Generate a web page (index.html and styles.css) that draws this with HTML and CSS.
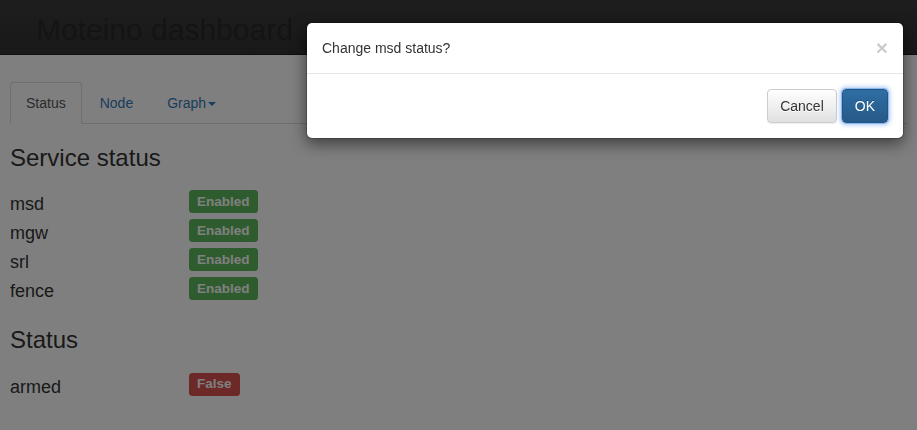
FILE: index.html
```html
<!DOCTYPE html>
<html lang="en">
<head>
<meta charset="utf-8">
<title>Moteino dashboard</title>
<link rel="stylesheet" href="styles.css">
</head>
<body>
<header class="topbar">
  <h1 class="brand">Moteino dashboard</h1>
</header>
<main class="container">
  <ul class="tabs">
    <li class="tab active"><a href="#">Status</a></li>
    <li class="tab"><a href="#">Node</a></li>
    <li class="tab"><a href="#">Graph<span class="caret"></span></a></li>
  </ul>
  <h3 class="section-title">Service status</h3>
  <div class="status-list">
    <div class="status-name">msd</div><div><span class="badge badge-ok">Enabled</span></div>
    <div class="status-name">mgw</div><div><span class="badge badge-ok">Enabled</span></div>
    <div class="status-name">srl</div><div><span class="badge badge-ok">Enabled</span></div>
    <div class="status-name">fence</div><div><span class="badge badge-ok">Enabled</span></div>
  </div>
  <h3 class="section-title">Status</h3>
  <div class="status-list">
    <div class="status-name">armed</div><div><span class="badge badge-bad">False</span></div>
  </div>
</main>
<div class="backdrop"></div>
<div class="modal">
  <div class="modal-header">
    <span class="modal-title">Change msd status?</span>
    <button class="close" type="button">&times;</button>
  </div>
  <div class="modal-footer">
    <button class="btn btn-default" type="button">Cancel</button>
    <button class="btn btn-primary" type="button">OK</button>
  </div>
</div>
</body>
</html>
```
FILE: styles.css
```css
* { box-sizing: border-box; }
html, body { margin: 0; padding: 0; }
body {
  font-family: "Liberation Sans", Arial, Helvetica, sans-serif;
  font-size: 14px;
  line-height: 20px;
  color: #333;
  background: #fff;
  width: 917px;
  height: 430px;
  overflow: hidden;
}
.topbar {
  height: 55px;
  background: linear-gradient(to bottom, #3c3c3c 0%, #323232 100%);
  border-bottom: 1px solid #1e1e1e;
  padding: 6px 0 0 36px;
}
.brand {
  margin: 0;
  font-size: 30px;
  font-weight: normal;
  line-height: 48px;
  color: #282828;
}
.container { padding: 0 10px; }
.tabs {
  list-style: none;
  margin: 27px 0 0;
  padding: 0;
  display: flex;
  border-bottom: 1px solid #ddd;
}
.tab { margin-bottom: -1px; margin-right: 2px; }
.tab a {
  display: block;
  padding: 10px 15px;
  line-height: 20px;
  border: 1px solid transparent;
  border-radius: 4px 4px 0 0;
  color: #337ab7;
  text-decoration: none;
}
.tab.active a {
  color: #555;
  background: #fff;
  border-color: #ddd #ddd transparent;
}
.caret {
  display: inline-block;
  width: 0; height: 0;
  margin-left: 2px;
  vertical-align: middle;
  border-top: 4px solid #337ab7;
  border-left: 4px solid transparent;
  border-right: 4px solid transparent;
}
.section-title {
  margin: 21px 0 10px;
  font-size: 24px;
  font-weight: normal;
  line-height: 1.1;
  color: #333;
}
.status-list {
  display: grid;
  grid-template-columns: 179px auto;
  align-items: start;
  padding-top: 9px;
  font-size: 18px;
  line-height: 29px;
}
.badge {
  display: inline-block;
  vertical-align: top;
  padding: 4.5px 8px;
  font-size: 13.5px;
  line-height: 14px;
  font-weight: bold;
  color: #fff;
  border-radius: 3.5px;
}
.badge-ok { background: #5cb85c; }
.badge-bad { background: #d9534f; }
.backdrop {
  position: fixed;
  inset: 0;
  background: rgba(0, 0, 0, 0.5);
}
.modal {
  position: absolute;
  left: 306px;
  top: 22px;
  width: 598px;
  background: #fff;
  border: 1px solid rgba(0, 0, 0, 0.2);
  border-radius: 6px;
  box-shadow: 0 5px 15px rgba(0, 0, 0, 0.5);
  background-clip: padding-box;
}
.modal-header {
  display: flex;
  justify-content: space-between;
  align-items: flex-start;
  padding: 15px;
  border-bottom: 1px solid #e5e5e5;
}
.modal-title { line-height: 20px; color: #333; }
.close {
  margin-top: -1px;
  padding: 0;
  border: 0;
  background: transparent;
  font-family: "Liberation Sans", Arial, sans-serif;
  font-size: 21px;
  font-weight: bold;
  line-height: 1;
  color: #000;
  opacity: 0.2;
  text-shadow: 0 1px 0 #fff;
}
.modal-footer {
  display: flex;
  justify-content: flex-end;
  gap: 5px;
  padding: 15px;
}
.btn {
  font-family: "Liberation Sans", Arial, sans-serif;
  font-size: 14px;
  line-height: 20px;
  padding: 6px 12px;
  border: 1px solid transparent;
  border-radius: 4px;
}
.btn-default {
  color: #333;
  background: linear-gradient(to bottom, #fff 0%, #e0e0e0 100%);
  border-color: #ccc;
  text-shadow: 0 1px 0 #fff;
  box-shadow: inset 0 1px 0 rgba(255,255,255,.15), 0 1px 1px rgba(0,0,0,.075);
}
.btn-primary {
  color: #fff;
  background: linear-gradient(to bottom, #2e6da4 0%, #265a88 100%);
  border-color: #245580;
  text-shadow: 0 -1px 0 rgba(0,0,0,.2);
  box-shadow: 0 0 0 1px rgba(120,170,240,.7), 0 0 4px 2px rgba(110,165,240,.6);
}
```
